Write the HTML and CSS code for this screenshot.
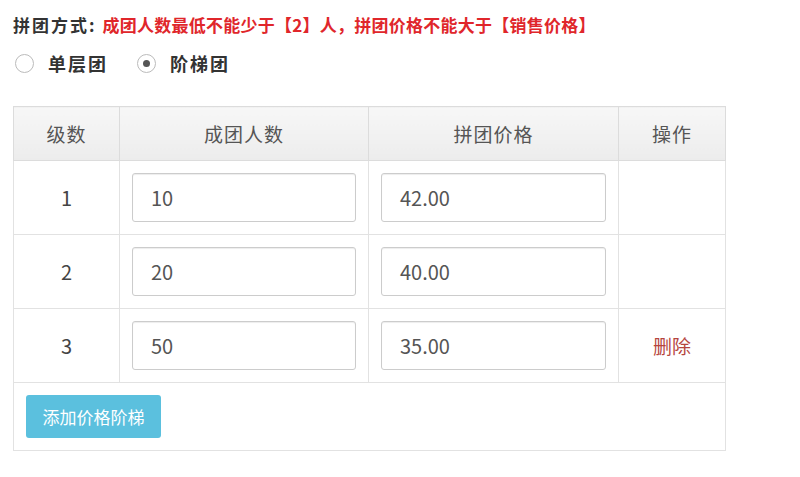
FILE: index.html
```html
<!DOCTYPE html>
<html lang="zh">
<head>
<meta charset="utf-8">
<link rel="stylesheet" href="styles.css">
</head>
<body>
<div class="page">
  <div class="title"><span class="label">拼团方式:</span><span class="warn">成团人数最低不能少于【2】人，拼团价格不能大于【销售价格】</span></div>
  <div class="radios">
    <label class="radio"><span class="circle"></span><span class="rtext">单层团</span></label>
    <label class="radio"><span class="circle checked"></span><span class="rtext">阶梯团</span></label>
  </div>
  <table class="grid">
    <thead>
      <tr>
        <th class="c1">级数</th>
        <th class="c2">成团人数</th>
        <th class="c3">拼团价格</th>
        <th class="c4">操作</th>
      </tr>
    </thead>
    <tbody>
      <tr>
        <td class="num">1</td>
        <td class="inp"><div class="input">10</div></td>
        <td class="inp"><div class="input">42.00</div></td>
        <td class="op"></td>
      </tr>
      <tr>
        <td class="num">2</td>
        <td class="inp"><div class="input">20</div></td>
        <td class="inp"><div class="input">40.00</div></td>
        <td class="op"></td>
      </tr>
      <tr>
        <td class="num">3</td>
        <td class="inp"><div class="input">50</div></td>
        <td class="inp"><div class="input">35.00</div></td>
        <td class="op"><span class="del">删除</span></td>
      </tr>
      <tr>
        <td class="foot" colspan="4"><span class="btn">添加价格阶梯</span></td>
      </tr>
    </tbody>
  </table>
</div>
</body>
</html>
```

FILE: styles.css
```css
html, body {
  margin: 0;
  padding: 0;
  background: #fff;
}
body {
  font-family: "Noto Sans CJK SC", "Noto Sans", sans-serif;
  color: #555;
}
.page {
  padding: 12px 0 0 13px;
}
.title {
  height: 26px;
  line-height: 26px;
  display: flex;
  align-items: center;
  font-weight: bold;
}
.label {
  font-size: 17px;
  color: #333;
  letter-spacing: 2px;
  margin-right: 6px;
}
.warn {
  font-size: 17px;
  letter-spacing: 0.25px;
  color: #e0262b;
}
.radios {
  display: flex;
  align-items: center;
  height: 26px;
  margin-top: 12px;
  padding-left: 2px;
}
.radio {
  display: flex;
  align-items: center;
  margin-right: 29px;
}
.circle {
  width: 19px;
  height: 19px;
  border: 1px solid #bbb;
  border-radius: 50%;
  box-sizing: border-box;
  background: #fff;
  position: relative;
  margin-right: 14px;
}
.circle.checked::after {
  content: "";
  position: absolute;
  left: 5px;
  top: 5px;
  width: 7px;
  height: 7px;
  border-radius: 50%;
  background: #555;
}
.rtext {
  font-size: 18px;
  font-weight: bold;
  color: #333;
  letter-spacing: 2px;
}
.grid {
  margin-top: 30px;
  border-collapse: collapse;
  width: 713px;
  border: 1px solid #ddd;
}
.grid th, .grid td {
  border: 1px solid #e2e2e2;
  padding: 0;
}
.grid th {
  height: 53px;
  background: linear-gradient(#f7f7f7, #ececec);
  font-weight: normal;
  font-size: 19px;
  color: #555;
  letter-spacing: 1px;
  border-color: #dcdcdc;
}
.c1 { width: 105px; }
.c2 { width: 248px; }
.c3 { width: 249px; }
.c4 { width: auto; }
.grid td {
  height: 73px;
}
.num {
  text-align: center;
  font-size: 20px;
  color: #444;
}
.inp {
  padding: 0 12px !important;
}
.input {
  height: 49px;
  box-sizing: border-box;
  border: 1px solid #ccc;
  border-radius: 3px;
  box-shadow: inset 0 1px 1px rgba(0,0,0,0.075);
  padding-left: 18px;
  font-size: 20px;
  line-height: 47px;
  color: #555;
  background: #fff;
}
.op {
  text-align: center;
}
.del {
  font-size: 19px;
  color: #b5453e;
}
.grid td.foot {
  height: 67px;
  padding-left: 12px;
}
.btn {
  display: inline-block;
  width: 135px;
  height: 43px;
  line-height: 43px;
  text-align: center;
  background: #5bc0de;
  color: #fff;
  font-size: 17px;
  border-radius: 3px;
}
```
